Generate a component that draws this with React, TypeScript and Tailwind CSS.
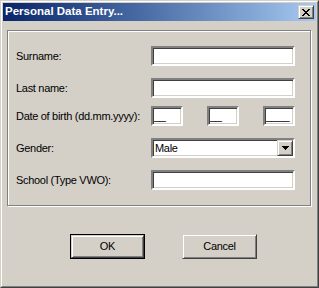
import React from "react";

const sunken =
  "border-2 border-t-[#808080] border-l-[#808080] border-b-white border-r-white shadow-[inset_1px_1px_0_#404040,inset_-1px_-1px_0_#d4d0c8]";
const raised =
  "border-t border-l border-b border-r border-t-[#d4d0c8] border-l-[#d4d0c8] border-b-[#404040] border-r-[#404040] shadow-[inset_1px_1px_0_#ffffff,inset_-1px_-1px_0_#808080]";

function Field({ children, className = "" }: { children?: React.ReactNode; className?: string }) {
  return (
    <div className={`h-[20px] bg-white ${sunken} flex items-center ${className}`}>{children}</div>
  );
}

function Row({ label, children, className = "" }: { label: string; children: React.ReactNode; className?: string }) {
  return (
    <div className={`flex items-center h-[20px] ${className}`}>
      <div className="w-[135px] shrink-0 leading-none">{label}</div>
      {children}
    </div>
  );
}

export default function App() {
  return (
    <div
      className="w-[319px] h-[288px] bg-[#d4d0c8] border border-t-[#d4d0c8] border-l-[#d4d0c8] border-b-[#404040] border-r-[#404040] text-black text-[11px] tracking-[-0.3px]"
      style={{ fontFamily: '"Liberation Sans", Arial, sans-serif' }}
    >
      <div className="w-full h-full border border-t-white border-l-white border-b-[#808080] border-r-[#808080] p-px flex flex-col">
        {/* Title bar */}
        <div className="h-[18px] shrink-0 flex items-center bg-gradient-to-r from-[#0a246a] to-[#a6caf0] pl-[2px] pr-[2px]">
          <div className="flex-1 text-white font-bold text-[11.5px] tracking-[0px] leading-none">
            Personal Data Entry...
          </div>
          <div className={`w-[16px] h-[14px] bg-[#d4d0c8] ${raised} flex items-center justify-center`}>
            <svg width="8" height="7" viewBox="0 0 8 7" shapeRendering="crispEdges">
              <path
                fill="#000"
                d="M0 0h2v1h-2zM6 0h2v1h-2zM1 1h2v1h-2zM5 1h2v1h-2zM2 2h4v1h-4zM3 3h2v1h-2zM2 4h4v1h-4zM1 5h2v1h-2zM5 5h2v1h-2zM0 6h2v1h-2zM6 6h2v1h-2z"
              />
            </svg>
          </div>
        </div>

        {/* Group box */}
        <div className="mt-[9px] ml-[4px] mr-[5px] h-[176px] border border-[#808080] shadow-[inset_1px_1px_0_#ffffff,1px_1px_0_#ffffff] pt-[15px] pb-[15px] pl-[8px] flex flex-col">
          <Row label="Surname:">
            <Field className="w-[144px]" />
          </Row>
          <Row label="Last name:" className="mt-[12px]">
            <Field className="w-[144px]" />
          </Row>
          <Row label="Date of birth (dd.mm.yyyy):" className="mt-[8px]">
            <div className="flex w-[144px] justify-between">
              <Field className="w-[32px] pl-px">__</Field>
              <Field className="w-[32px] pl-px">__</Field>
              <Field className="w-[32px] pl-px">____</Field>
            </div>
          </Row>
          <Row label="Gender:" className="mt-[12px]">
            <Field className="w-[144px]">
              <div className="flex-1 pl-[2px] leading-none">Male</div>
              <div className={`w-[16px] h-full bg-[#d4d0c8] ${raised} flex items-center justify-center`}>
                <svg width="7" height="4" viewBox="0 0 7 4" shapeRendering="crispEdges">
                  <path fill="#000" d="M0 0h7v1h-7zM1 1h5v1h-5zM2 2h3v1h-3zM3 3h1v1h-1z" />
                </svg>
              </div>
            </Field>
          </Row>
          <Row label="School (Type VWO):" className="mt-[12px]">
            <Field className="w-[144px]" />
          </Row>
        </div>

        {/* Buttons */}
        <div className="mt-[28px] ml-[67px] flex gap-[37px]">
          <div className="w-[75px] h-[25px] border border-black">
            <div className={`w-full h-full ${raised} flex items-center justify-center`}>OK</div>
          </div>
          <div className={`w-[75px] h-[25px] ${raised} flex items-center justify-center`}>Cancel</div>
        </div>
      </div>
    </div>
  );
}
